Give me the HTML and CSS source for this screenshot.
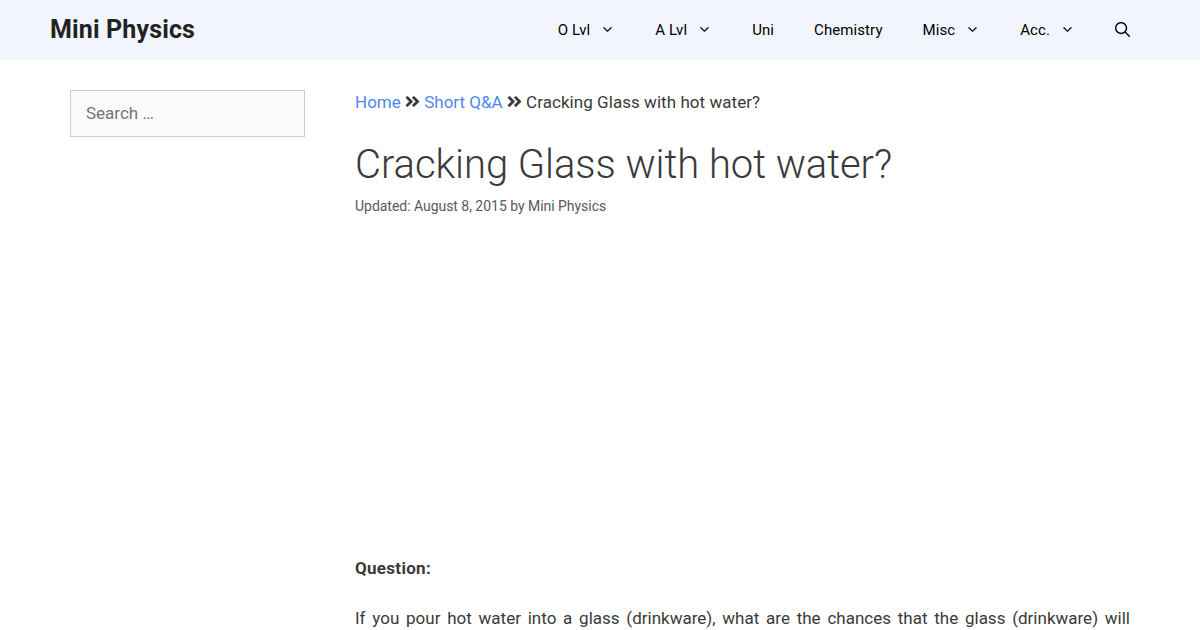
FILE: index.html
```html
<!DOCTYPE html>
<html lang="en">
<head>
<meta charset="utf-8">
<title>Cracking Glass with hot water? | Mini Physics</title>
<link rel="stylesheet" href="styles.css">
</head>
<body>
<svg class="symbols" aria-hidden="true">
  <symbol id="chevron" viewBox="0 0 330 512"><path d="M305.913 197.085c0 2.266-1.133 4.815-2.833 6.514L171.087 335.593c-1.7 1.7-4.249 2.832-6.515 2.832s-4.815-1.133-6.515-2.832L26.064 203.599c-1.7-1.7-2.832-4.248-2.832-6.514s1.132-4.816 2.832-6.515l14.162-14.163c1.7-1.699 3.966-2.832 6.515-2.832 2.266 0 4.815 1.133 6.515 2.832l111.316 111.317 111.316-111.317c1.7-1.699 4.249-2.832 6.515-2.832s4.815 1.133 6.515 2.832l14.162 14.163c1.7 1.7 2.833 4.249 2.833 6.515z"/></symbol>
  <symbol id="double-right" viewBox="0 0 448 512"><path d="M224.3 273l-136 136c-9.400 9.400-24.600 9.400-33.900 0l-22.600-22.600c-9.400-9.400-9.400-24.600 0-33.900l96.400-96.400-96.400-96.400c-9.400-9.400-9.400-24.600 0-33.900L54.300 103c9.400-9.400 24.600-9.400 33.900 0l136 136c9.500 9.400 9.500 24.600.1 34zm192-34l-136-136c-9.400-9.400-24.600-9.400-33.900 0l-22.600 22.600c-9.400 9.400-9.400 24.600 0 33.900l96.400 96.400-96.400 96.400c-9.400 9.400-9.400 24.600 0 33.900l22.600 22.600c9.400 9.400 24.600 9.400 33.900 0l136-136c9.400-9.200 9.400-24.400 0-33.800z"/></symbol>
</svg>
<header class="site-header">
  <a class="brand">Mini Physics</a>
  <nav class="menu">
    <a>O Lvl<svg class="chevron"><use href="#chevron"/></svg></a>
    <a>A Lvl<svg class="chevron"><use href="#chevron"/></svg></a>
    <a>Uni</a>
    <a>Chemistry</a>
    <a>Misc<svg class="chevron"><use href="#chevron"/></svg></a>
    <a>Acc.<svg class="chevron"><use href="#chevron"/></svg></a>
    <a><svg class="search-icon" viewBox="0 0 512 512"><path fill-rule="evenodd" clip-rule="evenodd" d="M208 48c-88.366 0-160 71.634-160 160s71.634 160 160 160 160-71.634 160-160S296.366 48 208 48zM0 208C0 93.125 93.125 0 208 0s208 93.125 208 208c0 48.741-16.765 93.566-44.843 129.024l133.826 134.018c9.366 9.379 9.355 24.575-.025 33.941-9.379 9.366-24.575 9.355-33.941-.025L337.238 370.987C301.747 399.167 256.839 416 208 416 93.125 416 0 322.875 0 208z"/></svg></a>
  </nav>
</header>
<div class="page">
  <aside class="sidebar"><input class="search" type="search" placeholder="Search …"></aside>
  <main class="content">
    <p class="breadcrumbs"><a>Home</a> <svg class="separator"><use href="#double-right"/></svg> <a>Short Q&amp;A</a> <svg class="separator"><use href="#double-right"/></svg> <span class="current">Cracking Glass with hot water?</span></p>
    <h1 class="title">Cracking Glass with hot water?</h1>
    <div class="meta">Updated: August 8, 2015 by Mini Physics</div>
    <div class="article">
      <p><strong class="label">Question:</strong></p>
      <p class="clipped">If you pour hot water into a glass (drinkware), what are the chances that the glass (drinkware) will</p>
    </div>
  </main>
</div>
</body>
</html>
```
FILE: styles.css
```css
* { box-sizing: border-box; }
body { margin: 0; height: 630px; overflow: hidden; background: #fff; color: #3a3a3a; font: 17px/25.5px Roboto, sans-serif; }
p, h1 { margin: 0; }
.symbols { display: none; }
.site-header { display: flex; justify-content: space-between; height: 60px; padding: 0 50px; background: #f2f5fe; line-height: 60px; }
.brand { color: #222; font-size: 25px; font-weight: 700; letter-spacing: 0.14px; }
.menu { display: flex; color: #000; font-size: 15px; letter-spacing: 0.08px; }
.menu a { display: flex; align-items: center; padding: 0 20px; }
.chevron { width: 15px; height: 15px; margin: 0 0 1px 10px; fill: currentColor; stroke: currentColor; stroke-width: 8px; }
.search-icon { width: 15px; height: 15px; margin-bottom: 1px; fill: currentColor; }
.page { display: flex; gap: 50px; padding: 30px 70px 0; }
.sidebar { width: 235px; flex: none; }
.search { display: block; width: 235px; height: 47px; padding: 9px 15px 11px; border: 1px solid #ccc; border-radius: 0; background: #fafafa; font: 17px Roboto, sans-serif; appearance: none; }
.search::placeholder { color: #757575; }
.content { width: 775px; }
.breadcrumbs a { color: #5087ee; }
.current { letter-spacing: 0.05px; }
.separator { width: 15px; height: 17px; vertical-align: -2px; fill: currentColor; stroke: currentColor; stroke-width: 8px; }
.title { margin-top: 25px; font-size: 40px; line-height: 48px; font-weight: 300; letter-spacing: -0.06px; }
.meta { margin-top: 7px; color: #595959; font-size: 14px; line-height: 21px; letter-spacing: -0.03px; }
.article { padding-top: 339px; }
.article p { margin-bottom: 25px; }
.label { letter-spacing: 0.3px; }
.article .clipped { text-align: justify; text-align-last: justify; white-space: nowrap; }
```
